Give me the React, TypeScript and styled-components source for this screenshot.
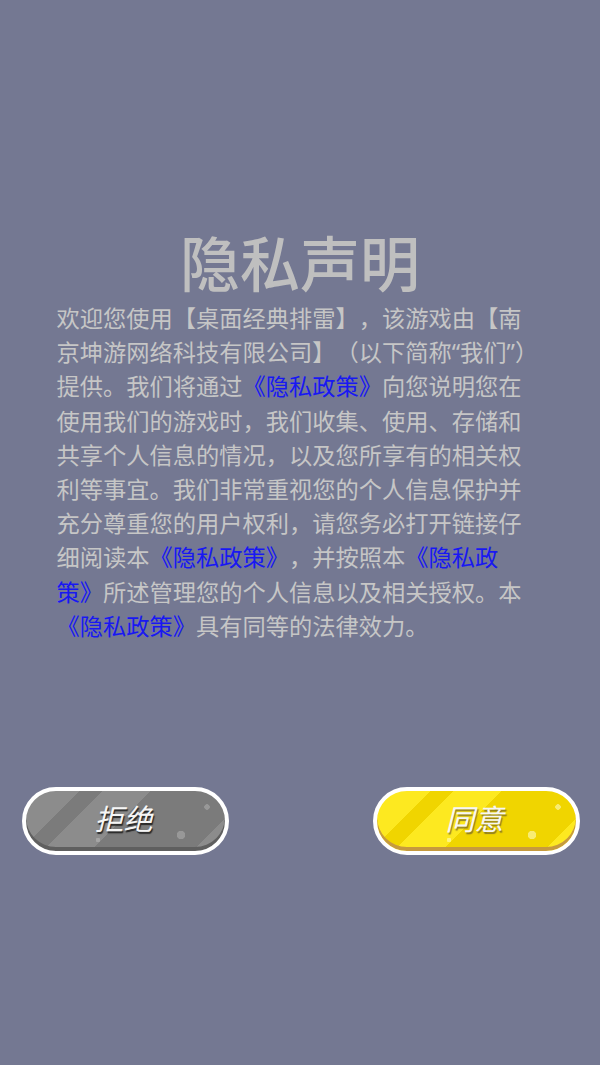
import React from 'react';
import styled, { createGlobalStyle, css } from 'styled-components';

const GlobalStyle = createGlobalStyle`
  html, body {
    margin: 0;
    padding: 0;
    background: #747892;
  }
  body {
    font-family: "Noto Sans CJK SC", "Noto Sans", sans-serif;
  }
`;

const Page = styled.div`
  box-sizing: border-box;
  min-height: 1065px;
  padding-top: 231px;
  display: flex;
  flex-direction: column;
  align-items: center;
  background: #747892;
`;

const Title = styled.h1`
  margin: 0;
  font-size: 60px;
  line-height: 60px;
  font-weight: 500;
  color: #bfbfbf;
  letter-spacing: 0;
`;

const Body = styled.p`
  width: 487px;
  margin: 10px 0 0;
  font-family: "Noto Sans", "Noto Sans CJK SC", sans-serif;
  font-size: 23.25px;
  line-height: 34.2px;
  color: #c6c6c6;
  text-spacing-trim: space-all;
`;

const Link = styled.span`
  color: #1818f2;
`;

const ButtonRow = styled.div`
  box-sizing: border-box;
  width: 100%;
  margin-top: 144px;
  padding: 0 20px 0 22px;
  display: flex;
  justify-content: space-between;
`;

type Variant = 'gray' | 'yellow';

const palette = {
  gray: { base: '#7b7b7b', light: '#8c8c8c', edge: '#5f5f5f', dot: 'rgba(255,255,255,0.22)', shadow: 'rgba(30,30,30,0.9)' },
  yellow: { base: '#f0d500', light: '#fde920', edge: '#c69a3e', dot: 'rgba(255,255,210,0.55)', shadow: 'rgba(110,95,40,0.75)' },
};

const GameButton = styled.button<{ $variant: Variant }>`
  box-sizing: border-box;
  width: 207px;
  height: 68px;
  border: 4px solid #ffffff;
  border-radius: 34px;
  padding: 0 4px 8px 0;
  cursor: pointer;
  font-family: "Noto Sans CJK SC", sans-serif;
  font-size: 29px;
  line-height: 1;
  font-style: italic;
  font-weight: 400;
  color: #f6f6f6;
  ${({ $variant }) => {
    const c = palette[$variant];
    return css`
      background-color: ${c.base};
      background-image:
        radial-gradient(circle at 181px 16px, ${c.dot} 0 2.5px, transparent 3px),
        radial-gradient(circle at 155px 44px, ${c.dot} 0 4px, transparent 4.5px),
        radial-gradient(circle at 72px 49px, ${c.dot} 0 2px, transparent 2.5px),
        linear-gradient(
          135deg,
          ${c.light} 0 38px,
          ${c.base} 38px 54px,
          ${c.light} 54px 88px,
          ${c.base} 88px 160px,
          ${c.light} 160px
        );
      box-shadow: inset 0 -4px 0 ${c.edge};
      text-shadow: 1px 2px 1px ${c.shadow};
    `;
  }}
`;

const App: React.FC = () => {
  return (
    <>
      <GlobalStyle />
      <Page>
        <Title>隐私声明</Title>
        <Body>
          欢迎您使用【桌面经典排雷】，该游戏由【南京坤游网络科技有限公司】（以下简称“我们”）提供。我们将通过
          <Link>《隐私政策》</Link>
          向您说明您在使用我们的游戏时，我们收集、使用、存储和共享个人信息的情况，以及您所享有的相关权利等事宜。我们非常重视您的个人信息保护并充分尊重您的用户权利，请您务必打开链接仔细阅读本
          <Link>《隐私政策》</Link>
          ，并按照本
          <Link>《隐私政策》</Link>
          所述管理您的个人信息以及相关授权。本
          <Link>《隐私政策》</Link>
          具有同等的法律效力。
        </Body>
        <ButtonRow>
          <GameButton $variant="gray">拒绝</GameButton>
          <GameButton $variant="yellow">同意</GameButton>
        </ButtonRow>
      </Page>
    </>
  );
};

export default App;
